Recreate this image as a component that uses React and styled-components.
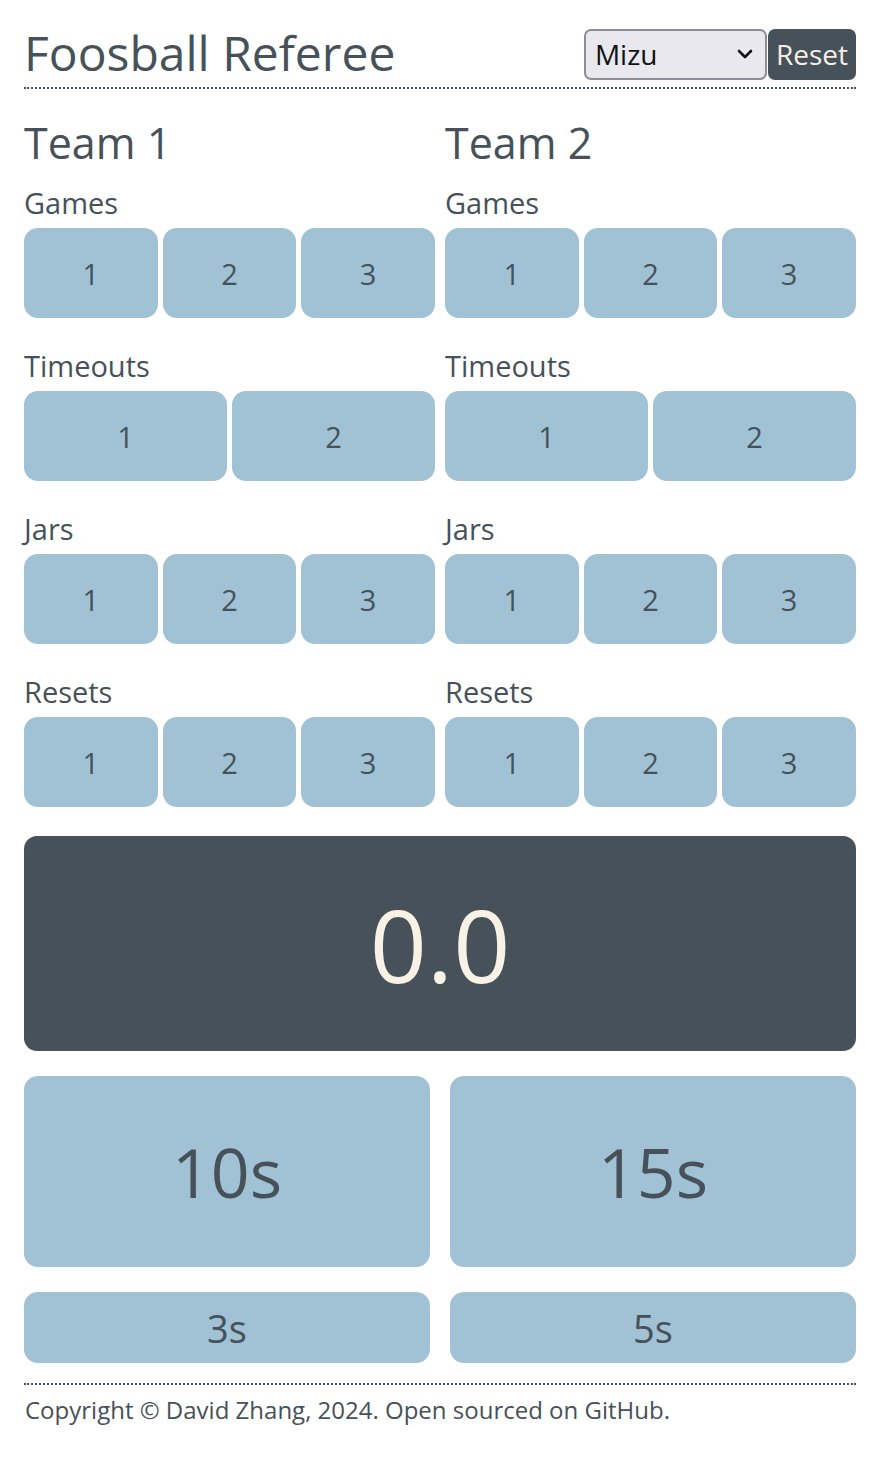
import React, { useState } from 'react'
import styled, { createGlobalStyle } from 'styled-components'

const GlobalStyle = createGlobalStyle`
  body {
    margin: 0;
    background: #ffffff;
    font-family: 'Open Sans', 'Noto Sans', sans-serif;
    color: #46515a;
  }
`

const Page = styled.div`
  padding: 24px 24px 0;
`

const Header = styled.header`
  display: flex;
  justify-content: space-between;
  align-items: center;
  padding-bottom: 5px;
  border-bottom: 2px dotted #46515a;
`

const Title = styled.h1`
  margin: 0;
  font-size: 48px;
  font-weight: 400;
  line-height: 58px;
`

const Controls = styled.div`
  display: flex;
  align-items: center;
  gap: 1px;
  margin-top: 2px;
`

const SelectWrap = styled.div`
  position: relative;
`

const Select = styled.select`
  appearance: none;
  width: 183px;
  height: 51px;
  padding: 0 40px 0 9px;
  font-family: inherit;
  font-size: 28px;
  color: #111;
  background: #e9e8ee;
  border: 2px solid #8f8c99;
  border-radius: 7px;
`

const Chevron = styled.svg`
  position: absolute;
  right: 14px;
  top: 50%;
  transform: translateY(-50%);
  pointer-events: none;
`

const ResetButton = styled.button`
  height: 51px;
  padding: 0 8px;
  font-family: inherit;
  font-size: 28px;
  color: #f6efe4;
  background: #46515a;
  border: none;
  border-radius: 7px;
`

const Teams = styled.div`
  display: grid;
  grid-template-columns: 1fr 1fr;
  column-gap: 10px;
  margin-top: 30px;
`

const TeamName = styled.h2`
  margin: 0 0 20px;
  font-size: 43px;
  font-weight: 400;
  line-height: 48px;
`

const Section = styled.div`
  margin-bottom: 32px;
`

const Label = styled.div`
  font-size: 29px;
  line-height: 31px;
  margin-bottom: 10px;
`

const ButtonRow = styled.div`
  display: grid;
  grid-template-columns: repeat(${p => p.$count}, 1fr);
  gap: 5px;
`

const CountButton = styled.button`
  height: 90px;
  font-family: inherit;
  font-size: 29px;
  color: #46515a;
  background: ${p => (p.$on ? '#6f98ae' : '#a0c2d4')};
  border: none;
  border-radius: 14px;
  cursor: pointer;
`

const Clock = styled.div`
  display: flex;
  align-items: center;
  justify-content: center;
  height: 215px;
  margin-top: -3px;
  background: #46515a;
  color: #f8f1e6;
  border-radius: 13px;
  font-size: 100px;
`

const TimerGrid = styled.div`
  display: grid;
  grid-template-columns: 1fr 1fr;
  column-gap: 20px;
  row-gap: 25px;
  margin-top: 25px;
`

const TimerButton = styled.button`
  height: ${p => (p.$big ? '191px' : '71px')};
  font-family: inherit;
  font-size: ${p => (p.$big ? '68px' : '38px')};
  color: #46515a;
  background: #a0c2d4;
  border: none;
  border-radius: 14px;
  cursor: pointer;
`

const Footer = styled.footer`
  margin-top: 20px;
  padding-top: 7px;
  border-top: 2px dotted #46515a;
  font-size: 24px;
  line-height: 36px;
  padding-left: 1px;
`

const sections = [
  { name: 'Games', count: 3 },
  { name: 'Timeouts', count: 2 },
  { name: 'Jars', count: 3 },
  { name: 'Resets', count: 3 },
]

function Team({ name }) {
  const [picked, setPicked] = useState({})
  return (
    <div>
      <TeamName>{name}</TeamName>
      {sections.map(s => (
        <Section key={s.name}>
          <Label>{s.name}</Label>
          <ButtonRow $count={s.count}>
            {Array.from({ length: s.count }, (_, i) => (
              <CountButton
                key={i}
                $on={picked[s.name] === i}
                onClick={() =>
                  setPicked({ ...picked, [s.name]: picked[s.name] === i ? null : i })
                }
              >
                {i + 1}
              </CountButton>
            ))}
          </ButtonRow>
        </Section>
      ))}
    </div>
  )
}

export default function App() {
  const [table, setTable] = useState('mizu')
  return (
    <Page>
      <GlobalStyle />
      <Header>
        <Title>Foosball Referee</Title>
        <Controls>
          <SelectWrap>
            <Select value={table} onChange={e => setTable(e.target.value)}>
              <option value="mizu">Mizu</option>
              <option value="other">Other</option>
            </Select>
            <Chevron width="16" height="10" viewBox="0 0 16 10">
              <path d="M2 2l6 6 6-6" fill="none" stroke="#111" strokeWidth="2.6" strokeLinecap="round" strokeLinejoin="round" />
            </Chevron>
          </SelectWrap>
          <ResetButton>Reset</ResetButton>
        </Controls>
      </Header>
      <Teams>
        <Team name="Team 1" />
        <Team name="Team 2" />
      </Teams>
      <Clock>0.0</Clock>
      <TimerGrid>
        <TimerButton $big>10s</TimerButton>
        <TimerButton $big>15s</TimerButton>
        <TimerButton>3s</TimerButton>
        <TimerButton>5s</TimerButton>
      </TimerGrid>
      <Footer>Copyright © David Zhang, 2024. Open sourced on GitHub.</Footer>
    </Page>
  )
}
